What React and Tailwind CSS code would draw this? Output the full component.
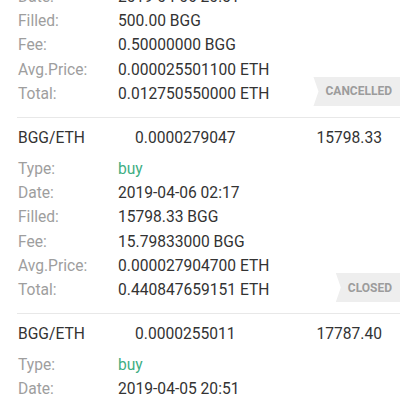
import React from "react";

const Row = ({ label, value, green }) => (
  <div className="flex h-[24.2px] items-center leading-[24px]">
    <span className="w-[100px] text-[#9e9e9e]">{label}</span>
    <span className={green ? "text-[#3fae83]" : "text-[#333333]"}>{value}</span>
  </div>
);

const Badge = ({ text }) => (
  <div className="absolute right-0 bottom-[11px] flex h-[29px] items-center bg-[#eeeeee] pl-[12px] pr-[8px] text-[12px] font-bold text-[#9c9c9c] [clip-path:polygon(0_0,100%_0,100%_100%,0_100%,5px_50%)]">
    {text}
  </div>
);

const Block = ({ header, rows, badge, top }) => (
  <div className={`relative ml-[17px] border-b border-[#e8e8e8] pb-[11px] ${top ? "" : "pt-[8px]"}`}>
    {header && (
      <div className="mb-[7px] flex h-[24px] items-center pl-px pr-[18px] leading-[24px] text-[#333333]">
        <span className="w-[117px]">{header[0]}</span>
        <span className="flex-1">{header[1]}</span>
        <span>{header[2]}</span>
      </div>
    )}
    <div className="pl-px">
      {rows.map((r) => (
        <Row key={r[0]} label={r[0]} value={r[1]} green={r[2]} />
      ))}
    </div>
    {badge && <Badge text={badge} />}
  </div>
);

export default function App() {
  return (
    <div
      className="h-[400px] w-[400px] overflow-hidden bg-white text-[15.6px]"
      style={{ fontFamily: "Roboto, 'Noto Sans', sans-serif" }}
    >
      <div className="-mt-[15px]">
        <Block
          top
          rows={[
            ["Date:", "2019-04-06 20:51"],
            ["Filled:", "500.00 BGG"],
            ["Fee:", "0.50000000 BGG"],
            ["Avg.Price:", "0.000025501100 ETH"],
            ["Total:", "0.012750550000 ETH"],
          ]}
          badge="CANCELLED"
        />
        <Block
          header={["BGG/ETH", "0.0000279047", "15798.33"]}
          rows={[
            ["Type:", "buy", true],
            ["Date:", "2019-04-06 02:17"],
            ["Filled:", "15798.33 BGG"],
            ["Fee:", "15.79833000 BGG"],
            ["Avg.Price:", "0.000027904700 ETH"],
            ["Total:", "0.440847659151 ETH"],
          ]}
          badge="CLOSED"
        />
        <Block
          header={["BGG/ETH", "0.0000255011", "17787.40"]}
          rows={[
            ["Type:", "buy", true],
            ["Date:", "2019-04-05 20:51"],
            ["Filled:", "17787.40 BGG"],
          ]}
        />
      </div>
    </div>
  );
}
